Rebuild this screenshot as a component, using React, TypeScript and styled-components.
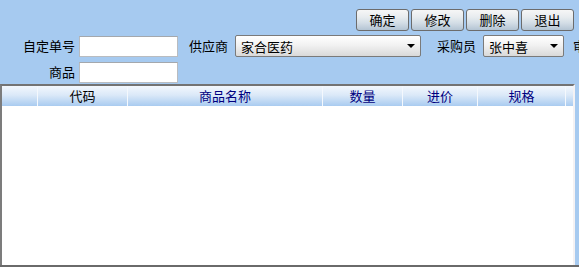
import React from "react";
import styled, {createGlobalStyle} from "styled-components";

const GlobalStyle = createGlobalStyle`
  html, body {
    margin: 0;
    padding: 0;
    height: 100%;
    overflow: hidden;
    background: #a6caf0;
    font-family: "Noto Sans CJK SC", "Noto Sans", sans-serif;
    font-size: 13px;
    color: #000;
  }
`;

const Page = styled.div`
  width: 579px;
  height: 267px;
  display: flex;
  flex-direction: column;
  overflow: hidden;
`;

const Toolbar = styled.div`
  display: flex;
  justify-content: flex-end;
  gap: 2px;
  padding: 9px 5px 0 0;
`;

const Button = styled.button`
  width: 53px;
  height: 22px;
  padding: 0;
  border: 1px solid #6c6c6c;
  border-radius: 3px;
  background: linear-gradient(to bottom, #f6f6f6 0%, #e8ecef 35%, #d3dde6 65%, #b4c4d3 100%);
  font: inherit;
  font-size: 13px;
  line-height: 20px;
  color: #000;
`;

const FormRow = styled.div<{ $top: number }>`
  display: flex;
  align-items: center;
  height: 22px;
  margin-top: ${p => p.$top}px;
  white-space: nowrap;
`;

const Label = styled.span<{ $width?: number; $gap?: number; $pad?: number }>`
  flex: none;
  box-sizing: border-box;
  width: ${p => (p.$width ? `${p.$width}px` : "auto")};
  margin-left: ${p => p.$gap ?? 0}px;
  padding-right: ${p => p.$pad ?? 7}px;
  text-align: right;
  line-height: 22px;
`;

const TextInput = styled.input`
  flex: none;
  box-sizing: border-box;
  width: 99px;
  height: 21px;
  margin: 0;
  border: 1px solid #b9bcc0;
  border-top-color: #a4a8ad;
  background: #fff;
  padding: 0 3px;
  font: inherit;
`;

const Combo = styled.div<{ $width: number }>`
  flex: none;
  box-sizing: border-box;
  width: ${p => p.$width}px;
  height: 22px;
  display: flex;
  align-items: center;
  justify-content: space-between;
  padding: 0 5px 0 5px;
  border: 1px solid #7a7a7a;
  border-radius: 2px;
  background: linear-gradient(to bottom, #ffffff 0%, #f2f2f2 45%, #d9d9d9 100%);
  font-size: 13px;
`;

const Arrow = styled.span`
  width: 0;
  height: 0;
  border-left: 4px solid transparent;
  border-right: 4px solid transparent;
  border-top: 4px solid #000;
`;

const Grid = styled.div`
  box-sizing: border-box;
  width: 575px;
  height: 181px;
  margin-top: 1px;
  border-top: 2px solid #737373;
  border-left: 2px solid #7c7c7c;
  border-right: 2px solid #f4f2f4;
  background: #fff;
`;

const HeaderRow = styled.div`
  display: flex;
  height: 20px;
  background: linear-gradient(to bottom, #f3f7fd 0%, #dbe9f8 45%, #a9cbf0 100%);
`;

const HeaderCell = styled.div<{ $width: number; $dark?: boolean }>`
  flex: none;
  box-sizing: border-box;
  width: ${p => p.$width}px;
  border-right: 1px solid #f4f8fd;
  text-align: center;
  line-height: 20px;
  font-size: 13px;
  color: ${p => (p.$dark ? "#000" : "#000080")};
`;

const Footer = styled.div`
  flex: 1;
  border-top: 2px solid #6a6a6a;
  background: #e6e6e6;
`;

const columns = [
    {title: "", width: 36, dark: true},
    {title: "代码", width: 90, dark: true},
    {title: "商品名称", width: 195},
    {title: "数量", width: 80},
    {title: "进价", width: 75},
    {title: "规格", width: 88},
];

export default function App() {
    return (
        <>
            <GlobalStyle/>
            <Page>
                <Toolbar>
                    <Button>确定</Button>
                    <Button>修改</Button>
                    <Button>删除</Button>
                    <Button>退出</Button>
                </Toolbar>
                <FormRow $top={4}>
                    <Label $width={79} $pad={4}>自定单号</Label>
                    <TextInput/>
                    <Label $gap={11}>供应商</Label>
                    <Combo $width={186}>
                        <span>家合医药</span>
                        <Arrow/>
                    </Combo>
                    <Label $gap={16}>采购员</Label>
                    <Combo $width={81}>
                        <span>张中喜</span>
                        <Arrow/>
                    </Combo>
                    <Label $gap={9}>审核员</Label>
                </FormRow>
                <FormRow $top={4}>
                    <Label $width={79} $pad={4}>商品</Label>
                    <TextInput/>
                </FormRow>
                <Grid>
                    <HeaderRow>
                        {columns.map((c, i) =>
                            <HeaderCell key={i} $width={c.width} $dark={c.dark}>{c.title}</HeaderCell>
                        )}
                    </HeaderRow>
                </Grid>
                <Footer/>
            </Page>
        </>
    );
}
